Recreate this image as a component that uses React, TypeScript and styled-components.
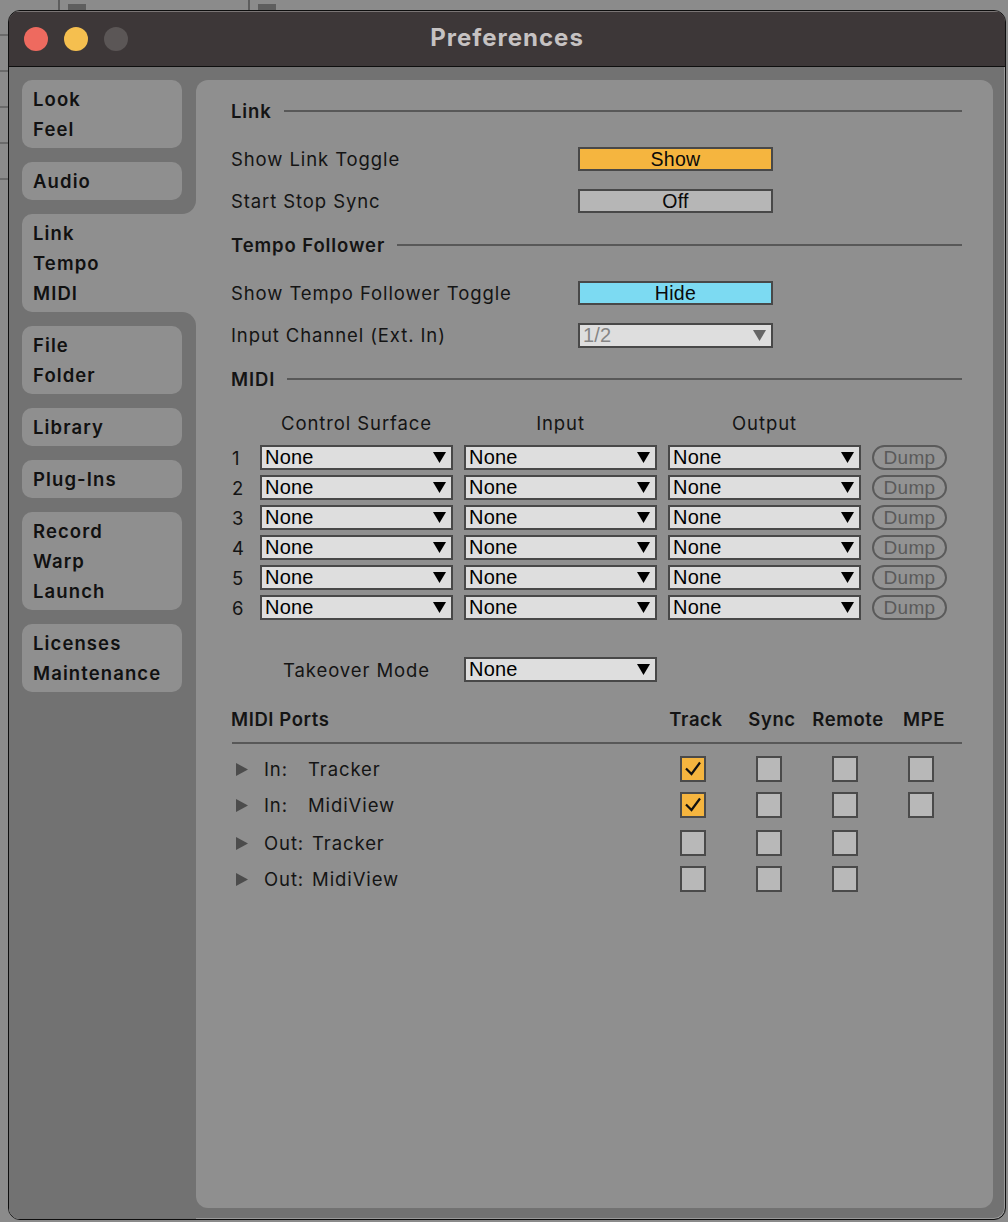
import { FC } from "react";
import styled, { createGlobalStyle } from "styled-components";

const GlobalStyle = createGlobalStyle`
  html, body {
    margin: 0;
    padding: 0;
    background: #8b8b8b;
  }
  body {
    font-family: Inter, "Noto Sans", sans-serif;
    color: #141414;
  }
`;

// サイドバーのタブ
const tabGroups = {
  before: [["Look", "Feel"], ["Audio"]],
  selected: ["Link", "Tempo", "MIDI"],
  after: [["File", "Folder"], ["Library"], ["Plug-Ins"], ["Record", "Warp", "Launch"], ["Licenses", "Maintenance"]],
};

const ports = [
  { dir: "In:", name: "Tracker", track: true, mpe: true },
  { dir: "In:", name: "MidiView", track: true, mpe: true },
  { dir: "Out:", name: "Tracker", track: false, mpe: false, gap: true },
  { dir: "Out:", name: "MidiView", track: false, mpe: false },
];

const Arrow: FC<{ color?: string }> = ({ color = "#000" }) => (
  <svg width="13" height="11" viewBox="0 0 13 11">
    <polygon points="0,0 13,0 6.5,11" fill={color} />
  </svg>
);

const Check: FC = () => (
  <svg width="22" height="22" viewBox="0 0 22 22">
    <polyline points="4,10.5 9.5,16 18,4.5" fill="none" stroke="#111" strokeWidth="2.2" />
  </svg>
);

const Dropdown: FC<{ value: string; disabled?: boolean }> = ({ value, disabled }) => (
  <SDropdown disabled={disabled}>
    <span>{value}</span>
    <Arrow color={disabled ? "#666" : "#000"} />
  </SDropdown>
);

const App: FC = () => {
  return (
    <>
      <GlobalStyle />
      <SScreen>
        <SWindow>
          {/* タイトルバー */}
          <STitleBar>
            <SLights>
              <SLight color="#ee6a5f" />
              <SLight color="#f5bf4f" />
              <SLight color="#5b5656" />
            </SLights>
            <STitle>Preferences</STitle>
            <div />
          </STitleBar>

          <SBody>
            {/* サイドバー */}
            <SSidebar>
              <STabGroup part="before">
                {tabGroups.before.map((t) => (
                  <STab key={t[0]}>
                    {t.map((l) => (
                      <div key={l}>{l}</div>
                    ))}
                  </STab>
                ))}
              </STabGroup>
              <SSelectedRow>
                <STab selected>
                  {tabGroups.selected.map((l) => (
                    <div key={l}>{l}</div>
                  ))}
                </STab>
              </SSelectedRow>
              <STabGroup part="after">
                {tabGroups.after.map((t) => (
                  <STab key={t[0]}>
                    {t.map((l) => (
                      <div key={l}>{l}</div>
                    ))}
                  </STab>
                ))}
              </STabGroup>
            </SSidebar>

            {/* 設定パネル */}
            <SPanel>
              <SSection>
                <SHeading>
                  <span>Link</span>
                  <SRule />
                </SHeading>
                <SRow>
                  <span>Show Link Toggle</span>
                  <SToggle fill="#f5b53f">Show</SToggle>
                </SRow>
                <SRow>
                  <span>Start Stop Sync</span>
                  <SToggle fill="#b6b6b6">Off</SToggle>
                </SRow>
              </SSection>

              <SSection>
                <SHeading>
                  <span>Tempo Follower</span>
                  <SRule />
                </SHeading>
                <SRow>
                  <span>Show Tempo Follower Toggle</span>
                  <SToggle fill="#7cdaf2">Hide</SToggle>
                </SRow>
                <SRow>
                  <span>Input Channel (Ext. In)</span>
                  <Dropdown value="1/2" disabled />
                </SRow>
              </SSection>

              <SSection>
                <SHeading>
                  <span>MIDI</span>
                  <SRule />
                </SHeading>
                <SMidiGrid header>
                  <span />
                  <SColHead>Control Surface</SColHead>
                  <SColHead>Input</SColHead>
                  <SColHead>Output</SColHead>
                </SMidiGrid>
                <SMidiGrid>
                  {[1, 2, 3, 4, 5, 6].map((n) => (
                    <SMidiRow key={n}>
                      <SNum>{n}</SNum>
                      <Dropdown value="None" />
                      <Dropdown value="None" />
                      <Dropdown value="None" />
                      <SDump>Dump</SDump>
                    </SMidiRow>
                  ))}
                </SMidiGrid>
                <STakeover>
                  <span />
                  <SColHead>Takeover Mode</SColHead>
                  <Dropdown value="None" />
                </STakeover>
              </SSection>

              {/* MIDIポート */}
              <SPortsHead>
                <span>MIDI Ports</span>
                <SPortCol>Track</SPortCol>
                <SPortCol>Sync</SPortCol>
                <SPortCol>Remote</SPortCol>
                <SPortCol>MPE</SPortCol>
              </SPortsHead>
              <SPortsRule />
              {ports.map((p, i) => (
                <SPortRow key={i} spaced={!!p.gap}>
                  <SPortName>
                    <svg width="12" height="13" viewBox="0 0 12 13">
                      <polygon points="0,0 12,6.5 0,13" fill="#4c4c4c" />
                    </svg>
                    <SDir>{p.dir}</SDir>
                    <span>{p.name}</span>
                  </SPortName>
                  <SCheckCell>
                    <SCheckbox checked={p.track}>{p.track && <Check />}</SCheckbox>
                  </SCheckCell>
                  <SCheckCell>
                    <SCheckbox />
                  </SCheckCell>
                  <SCheckCell>
                    <SCheckbox />
                  </SCheckCell>
                  <SCheckCell>{p.mpe && <SCheckbox />}</SCheckCell>
                </SPortRow>
              ))}
            </SPanel>
          </SBody>
        </SWindow>
      </SScreen>
    </>
  );
};

export default App;

const SScreen = styled.div`
  width: 1008px;
  height: 1222px;
  box-sizing: border-box;
  padding: 10px 2px 2px 8px;
  background-color: #8b8b8b;
  // 背後のアプリの線
  background-image: linear-gradient(#5e5e5e, #5e5e5e), linear-gradient(#5e5e5e, #5e5e5e),
    linear-gradient(#5e5e5e, #5e5e5e), linear-gradient(#5e5e5e, #5e5e5e),
    repeating-linear-gradient(to bottom, transparent 0 34px, #6a6a6a 34px 36px);
  background-size: 2px 10px, 2px 10px, 18px 6px, 18px 6px, 8px 180px;
  background-position: 58px 0, 248px 0, 68px 4px, 258px 4px, 0 0;
  background-repeat: no-repeat;
  overflow: hidden;
`;
const SWindow = styled.div`
  width: 998px;
  height: 1210px;
  box-sizing: border-box;
  border: 1px solid #0e0e0e;
  border-radius: 12px;
  overflow: hidden;
  background: #727272;
  display: flex;
  flex-direction: column;
  box-shadow: inset 0 0 0 1px #9a9a9a;
`;
const STitleBar = styled.div`
  flex: none;
  height: 56px;
  box-sizing: border-box;
  background: #3d3738;
  box-shadow: inset 0 1px 0 #7a7575;
  border-bottom: 1px solid #0e0e0e;
  display: grid;
  grid-template-columns: 1fr auto 1fr;
  align-items: center;
`;
const SLights = styled.div`
  display: flex;
  gap: 16px;
  padding-left: 15px;
`;
const SLight = styled.div<{ color: string }>`
  width: 24px;
  height: 24px;
  border-radius: 50%;
  background: ${(p) => p.color};
`;
const STitle = styled.div`
  font-size: 24px;
  font-weight: 700;
  color: #c6c2c2;
  letter-spacing: 1px;
  margin-bottom: 3px;
`;
const SBody = styled.div`
  flex: 1;
  display: flex;
  padding: 13px 12px 11px 0;
`;
const SSidebar = styled.div`
  width: 187px;
  flex: none;
  display: flex;
  flex-direction: column;
  background: #8f8f8f;
  margin-top: -13px;
  margin-bottom: -11px;
`;
const STabGroup = styled.div<{ part: "before" | "after" }>`
  background: #727272;
  display: flex;
  flex-direction: column;
  gap: 14px;
  padding: ${(p) => (p.part === "before" ? "13px 14px 14px 13px" : "14px 14px 0 13px")};
  border-bottom-right-radius: ${(p) => (p.part === "before" ? "14px" : "0")};
  border-top-right-radius: ${(p) => (p.part === "after" ? "14px" : "0")};
  flex: ${(p) => (p.part === "after" ? 1 : "none")};
`;
const SSelectedRow = styled.div`
  background: #727272;
  padding-left: 13px;
`;
const STab = styled.div<{ selected?: boolean }>`
  background: #8f8f8f;
  border-radius: ${(p) => (p.selected ? "10px 0 0 10px" : "10px")};
  padding: 4px 11px;
  font-size: 18.5px;
  font-weight: 600;
  letter-spacing: 1.1px;
  line-height: 30px;
  color: #111;
`;
const SPanel = styled.div`
  flex: 1;
  background: #8f8f8f;
  border-radius: 12px;
  padding: 16px 31px 0 35px;
  font-size: 18.5px;
  letter-spacing: 0.9px;
`;
const SSection = styled.div`
  margin-bottom: 8px;
`;
const SHeading = styled.div`
  display: flex;
  align-items: center;
  gap: 12px;
  height: 30px;
  margin-bottom: 12px;
  font-weight: 600;
`;
const SRule = styled.div`
  flex: 1;
  height: 2px;
  background: #585858;
`;
const SRow = styled.div`
  display: grid;
  grid-template-columns: 347px 195px;
  align-items: center;
  height: 42px;
`;
const SToggle = styled.div<{ fill: string }>`
  height: 24px;
  box-sizing: border-box;
  border: 2px solid #484848;
  background: ${(p) => p.fill};
  font-family: "Liberation Sans", Arial, sans-serif;
  font-size: 19.5px;
  letter-spacing: 0.3px;
  line-height: 20px;
  text-align: center;
  color: #0a0a0a;
`;
const SDropdown = styled.div<{ disabled?: boolean }>`
  height: 25px;
  box-sizing: border-box;
  border: 2px solid #484848;
  background: #dedede;
  display: flex;
  align-items: center;
  justify-content: space-between;
  padding: 0 5px 0 3px;
  font-family: "Liberation Sans", Arial, sans-serif;
  font-size: 20px;
  letter-spacing: 0.2px;
  color: ${(p) => (p.disabled ? "#858585" : "#000")};
`;
const SMidiGrid = styled.div<{ header?: boolean }>`
  display: grid;
  grid-template-columns: 18px 193px 193px 193px 75px;
  column-gap: 11px;
  row-gap: 5px;
  align-items: center;
  height: ${(p) => (p.header ? "34px" : "auto")};
  margin-bottom: 5px;
`;
const SMidiRow = styled.div`
  display: contents;
`;
const SColHead = styled.span`
  text-align: center;
`;
const SNum = styled.span`
  padding-left: 1px;
`;
const SDump = styled.div`
  height: 25px;
  box-sizing: border-box;
  border: 2px solid #5a5a5a;
  border-radius: 13px;
  background: #939393;
  font-family: "Liberation Sans", Arial, sans-serif;
  font-size: 19px;
  letter-spacing: 0.3px;
  line-height: 21px;
  text-align: center;
  color: #5a5a5a;
`;
const STakeover = styled.div`
  display: grid;
  grid-template-columns: 18px 193px 193px;
  column-gap: 11px;
  align-items: center;
  margin-top: 37px;
`;
const SPortsHead = styled.div`
  display: grid;
  grid-template-columns: 1fr repeat(4, 76px);
  align-items: center;
  height: 30px;
  margin-top: 22px;
  font-weight: 600;
  letter-spacing: 0.6px;
`;
const SPortCol = styled.span`
  text-align: center;
`;
const SPortsRule = styled.div`
  height: 2px;
  background: #585858;
  margin: 8px 0 7px 1px;
`;
const SPortRow = styled.div<{ spaced: boolean }>`
  display: grid;
  grid-template-columns: 1fr repeat(4, 76px);
  align-items: center;
  height: 36px;
  margin-top: ${(p) => (p.spaced ? "2px" : "0")};
`;
const SPortName = styled.div`
  display: flex;
  align-items: center;
  padding-left: 5px;
  svg {
    margin-right: 16px;
  }
`;
const SDir = styled.span`
  min-width: 36px;
  margin-right: 8px;
`;
const SCheckCell = styled.div`
  display: flex;
  justify-content: center;
  padding-right: 6px;
`;
const SCheckbox = styled.div<{ checked?: boolean }>`
  width: 26px;
  height: 26px;
  box-sizing: border-box;
  border: 2px solid #4a4a4a;
  background: ${(p) => (p.checked ? "#f5b53f" : "#b8b8b8")};
  display: flex;
  align-items: center;
  justify-content: center;
`;
